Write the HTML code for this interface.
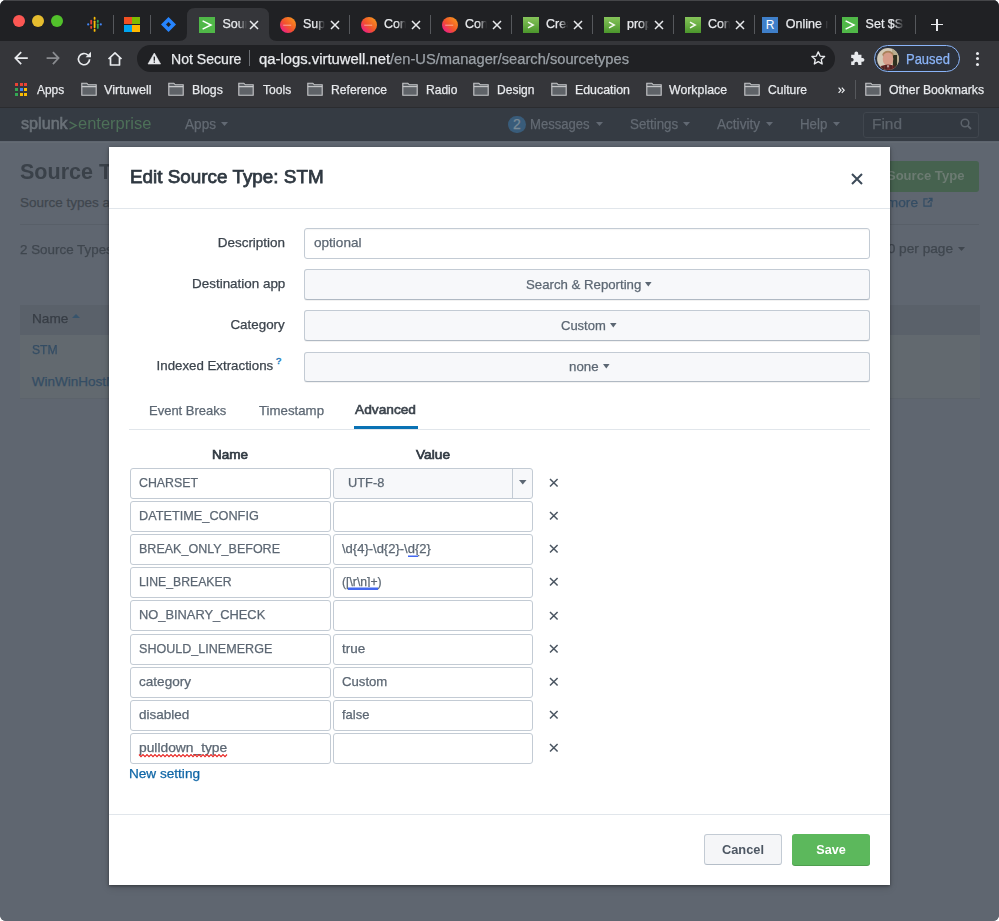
<!DOCTYPE html>
<html><head><meta charset="utf-8">
<style>
*{box-sizing:border-box;margin:0;padding:0}
html,body{width:999px;height:921px;overflow:hidden;background:#fff;font-family:"Liberation Sans",sans-serif}
.win{position:absolute;left:0;top:0;width:999px;height:921px;border-radius:6px;overflow:hidden;background:#5f6670}
.a{position:absolute}
.t{position:absolute;white-space:nowrap;line-height:1;-webkit-text-stroke:0.25px currentColor}
svg{position:absolute;overflow:visible}
</style></head><body>
<div class="win">
<div class="a" style="left:0px;top:0px;width:999px;height:41px;background:#202124"></div>
<div class="a" style="left:0px;top:0px;width:999px;height:1px;background:#454649"></div>
<div class="a" style="left:12.500000000000002px;top:14.9px;width:12.2px;height:12.2px;border-radius:50%;background:#fc5753"></div>
<div class="a" style="left:31.799999999999997px;top:14.9px;width:12.2px;height:12.2px;border-radius:50%;background:#e6bd2f"></div>
<div class="a" style="left:51.3px;top:14.9px;width:12.2px;height:12.2px;border-radius:50%;background:#52c12b"></div>
<svg style="left:179px;top:8px" width="98" height="33" viewBox="0 0 98 33"><path d="M0 33 Q8 33 8 25 L8 8 Q8 0 16 0 L82 0 Q90 0 90 8 L90 25 Q90 33 98 33 Z" fill="#35363a"/></svg>
<svg style="left:86px;top:16px" width="17" height="16" viewBox="0 0 17 16">
<circle cx="2.2" cy="8.4" r="1.1" fill="#4285f4"/><circle cx="14.8" cy="8.4" r="1.1" fill="#4285f4"/>
<rect x="4.3" y="3.8" width="1.8" height="4.8" rx=".9" fill="#ea4335"/><rect x="4.3" y="9.8" width="1.8" height="3" rx=".9" fill="#ea4335"/>
<rect x="10.9" y="3.8" width="1.8" height="3" rx=".9" fill="#34a853"/><rect x="10.9" y="7.4" width="1.8" height="5.4" rx=".9" fill="#34a853"/>
<rect x="7.7" y="0.8" width="1.8" height="3" rx=".9" fill="#fbbc04"/><rect x="7.7" y="4.4" width="1.8" height="7.8" rx=".9" fill="#fbbc04"/><rect x="7.7" y="12.8" width="1.8" height="3" rx=".9" fill="#fbbc04"/>
</svg>
<div class="a" style="left:113px;top:15px;width:1px;height:19px;background:#56585c"></div>
<div class="a" style="left:124px;top:16.5px;width:7.6px;height:7.6px;background:#f25022"></div>
<div class="a" style="left:132.4px;top:16.5px;width:7.6px;height:7.6px;background:#7fba00"></div>
<div class="a" style="left:124px;top:24.7px;width:7.6px;height:7.6px;background:#00a4ef"></div>
<div class="a" style="left:132.4px;top:24.7px;width:7.6px;height:7.6px;background:#ffb900"></div>
<div class="a" style="left:150px;top:15px;width:1px;height:19px;background:#56585c"></div>
<svg style="left:161px;top:17px" width="15" height="15" viewBox="0 0 15 15"><path d="M7.5 0 L15 7.5 L7.5 15 L0 7.5 Z" fill="#2684ff"/><path d="M7.5 5 L10 7.5 L7.5 10 L5 7.5 Z" fill="#202124"/></svg>
<svg style="left:199px;top:16.5px" width="16" height="16" viewBox="0 0 16 16"><rect width="16" height="16" fill="#50b848"/><path d="M3.6 3.8 L12 8 L3.6 12.2" stroke="#fff" stroke-width="1.5" fill="none"/></svg>
<div class="t" style="left:222.50px;top:17.92px;font-size:12.5px;color:#e8eaed;font-weight:normal;width:24px;overflow:hidden;-webkit-mask-image:linear-gradient(90deg,#000 60%,transparent);">Source Types</div>
<svg style="left:249.5px;top:20.5px" width="8" height="8" viewBox="0 0 8 8"><path d="M0 0 L8 8 M8 0 L0 8" stroke="#e8eaed" stroke-width="1.5" fill="none"/></svg>
<svg style="left:279.5px;top:16.5px" width="16" height="16" viewBox="0 0 16 16"><defs><linearGradient id="og" x1="0.1" y1="0.9" x2="0.9" y2="0.1"><stop offset="0" stop-color="#ec1b8c"/><stop offset="0.45" stop-color="#f2532c"/><stop offset="1" stop-color="#f7931e"/></linearGradient></defs><circle cx="8" cy="8" r="8" fill="url(#og)"/><rect x="3.2" y="7.7" width="8" height="1" fill="#fff" opacity=".5"/></svg>
<div class="t" style="left:303.00px;top:17.92px;font-size:12.5px;color:#e8eaed;font-weight:normal;width:22px;overflow:hidden;-webkit-mask-image:linear-gradient(90deg,#000 60%,transparent);">Support</div>
<svg style="left:330.5px;top:20.5px" width="8" height="8" viewBox="0 0 8 8"><path d="M0 0 L8 8 M8 0 L0 8" stroke="#e8eaed" stroke-width="1.5" fill="none"/></svg>
<div class="a" style="left:349px;top:15px;width:1px;height:19px;background:#56585c"></div>
<svg style="left:360.5px;top:16.5px" width="16" height="16" viewBox="0 0 16 16"><defs><linearGradient id="og" x1="0.1" y1="0.9" x2="0.9" y2="0.1"><stop offset="0" stop-color="#ec1b8c"/><stop offset="0.45" stop-color="#f2532c"/><stop offset="1" stop-color="#f7931e"/></linearGradient></defs><circle cx="8" cy="8" r="8" fill="url(#og)"/><rect x="3.2" y="7.7" width="8" height="1" fill="#fff" opacity=".5"/></svg>
<div class="t" style="left:384.00px;top:17.92px;font-size:12.5px;color:#e8eaed;font-weight:normal;width:22px;overflow:hidden;-webkit-mask-image:linear-gradient(90deg,#000 60%,transparent);">Configure</div>
<svg style="left:411.5px;top:20.5px" width="8" height="8" viewBox="0 0 8 8"><path d="M0 0 L8 8 M8 0 L0 8" stroke="#e8eaed" stroke-width="1.5" fill="none"/></svg>
<div class="a" style="left:430px;top:15px;width:1px;height:19px;background:#56585c"></div>
<svg style="left:441.5px;top:16.5px" width="16" height="16" viewBox="0 0 16 16"><defs><linearGradient id="og" x1="0.1" y1="0.9" x2="0.9" y2="0.1"><stop offset="0" stop-color="#ec1b8c"/><stop offset="0.45" stop-color="#f2532c"/><stop offset="1" stop-color="#f7931e"/></linearGradient></defs><circle cx="8" cy="8" r="8" fill="url(#og)"/><rect x="3.2" y="7.7" width="8" height="1" fill="#fff" opacity=".5"/></svg>
<div class="t" style="left:465.00px;top:17.92px;font-size:12.5px;color:#e8eaed;font-weight:normal;width:22px;overflow:hidden;-webkit-mask-image:linear-gradient(90deg,#000 60%,transparent);">Configure</div>
<svg style="left:492.5px;top:20.5px" width="8" height="8" viewBox="0 0 8 8"><path d="M0 0 L8 8 M8 0 L0 8" stroke="#e8eaed" stroke-width="1.5" fill="none"/></svg>
<div class="a" style="left:511px;top:15px;width:1px;height:19px;background:#56585c"></div>
<svg style="left:523.0px;top:16.5px" width="16" height="16" viewBox="0 0 16 16"><defs><linearGradient id="sg" x1="0" y1="0" x2="0" y2="1"><stop offset="0" stop-color="#86c45a"/><stop offset="1" stop-color="#4b962c"/></linearGradient></defs><rect width="16" height="16" fill="url(#sg)"/><path d="M5 5.2 L10.2 8 L5 10.8" stroke="#f4f8ef" stroke-width="1.5" fill="none"/></svg>
<div class="t" style="left:546.00px;top:17.92px;font-size:12.5px;color:#e8eaed;font-weight:normal;width:22px;overflow:hidden;-webkit-mask-image:linear-gradient(90deg,#000 60%,transparent);">Create</div>
<svg style="left:573.5px;top:20.5px" width="8" height="8" viewBox="0 0 8 8"><path d="M0 0 L8 8 M8 0 L0 8" stroke="#e8eaed" stroke-width="1.5" fill="none"/></svg>
<div class="a" style="left:592px;top:15px;width:1px;height:19px;background:#56585c"></div>
<svg style="left:604.0px;top:16.5px" width="16" height="16" viewBox="0 0 16 16"><defs><linearGradient id="sg" x1="0" y1="0" x2="0" y2="1"><stop offset="0" stop-color="#86c45a"/><stop offset="1" stop-color="#4b962c"/></linearGradient></defs><rect width="16" height="16" fill="url(#sg)"/><path d="M5 5.2 L10.2 8 L5 10.8" stroke="#f4f8ef" stroke-width="1.5" fill="none"/></svg>
<div class="t" style="left:627.00px;top:17.92px;font-size:12.5px;color:#e8eaed;font-weight:normal;width:22px;overflow:hidden;-webkit-mask-image:linear-gradient(90deg,#000 60%,transparent);">props</div>
<svg style="left:654.5px;top:20.5px" width="8" height="8" viewBox="0 0 8 8"><path d="M0 0 L8 8 M8 0 L0 8" stroke="#e8eaed" stroke-width="1.5" fill="none"/></svg>
<div class="a" style="left:673px;top:15px;width:1px;height:19px;background:#56585c"></div>
<svg style="left:685.0px;top:16.5px" width="16" height="16" viewBox="0 0 16 16"><defs><linearGradient id="sg" x1="0" y1="0" x2="0" y2="1"><stop offset="0" stop-color="#86c45a"/><stop offset="1" stop-color="#4b962c"/></linearGradient></defs><rect width="16" height="16" fill="url(#sg)"/><path d="M5 5.2 L10.2 8 L5 10.8" stroke="#f4f8ef" stroke-width="1.5" fill="none"/></svg>
<div class="t" style="left:708.00px;top:17.92px;font-size:12.5px;color:#e8eaed;font-weight:normal;width:22px;overflow:hidden;-webkit-mask-image:linear-gradient(90deg,#000 60%,transparent);">Configure</div>
<svg style="left:735.5px;top:20.5px" width="8" height="8" viewBox="0 0 8 8"><path d="M0 0 L8 8 M8 0 L0 8" stroke="#e8eaed" stroke-width="1.5" fill="none"/></svg>
<div class="a" style="left:754px;top:15px;width:1px;height:19px;background:#56585c"></div>
<div class="a" style="left:762.0px;top:16.5px;width:16px;height:16px;background:#3f7fc9;color:#fff;font-size:12px;line-height:16px;text-align:center">R</div>
<div class="t" style="left:785.80px;top:17.92px;font-size:12.5px;color:#e8eaed;font-weight:normal;width:42px;overflow:hidden;-webkit-mask-image:linear-gradient(90deg,#000 78%,transparent);">Online regex</div>
<div class="a" style="left:835px;top:15px;width:1px;height:19px;background:#56585c"></div>
<svg style="left:841.8px;top:16.5px" width="16" height="16" viewBox="0 0 16 16"><rect width="16" height="16" fill="#50b848"/><path d="M3.6 3.8 L12 8 L3.6 12.2" stroke="#fff" stroke-width="1.5" fill="none"/></svg>
<div class="t" style="left:865.60px;top:17.92px;font-size:12.5px;color:#e8eaed;font-weight:normal;width:38px;overflow:hidden;-webkit-mask-image:linear-gradient(90deg,#000 72%,transparent);">Set $SPLUNK</div>
<div class="a" style="left:915px;top:15px;width:1px;height:19px;background:#56585c"></div>
<div class="a" style="left:931px;top:23.8px;width:12px;height:1.6px;background:#e8eaed"></div>
<div class="a" style="left:936.2px;top:18.6px;width:1.6px;height:12px;background:#e8eaed"></div>
<div class="a" style="left:0px;top:41px;width:999px;height:67px;background:#35363a"></div>
<div class="a" style="left:0px;top:107px;width:999px;height:1px;background:#2b2c2f"></div>
<svg style="left:13px;top:50px" width="16" height="16" viewBox="0 0 16 16"><path d="M14.8 8.1 L2.3 8.1 M8.2 2.2 L2.3 8.1 L8.2 14.1" stroke="#e8eaed" stroke-width="1.7" fill="none"/></svg>
<svg style="left:45px;top:50px" width="16" height="16" viewBox="0 0 16 16"><path d="M1.6 8.1 L13.6 8.1 M7.9 2.2 L13.6 8.1 L7.9 14.1" stroke="#8a8c90" stroke-width="1.7" fill="none"/></svg>
<svg style="left:76px;top:51px" width="16" height="16" viewBox="0 0 16 16"><path d="M13.6 8.2 A5.6 5.6 0 1 1 11.9 4.1" stroke="#e8eaed" stroke-width="1.7" fill="none"/><path d="M9.6 6.2 L15 6.2 L15 0.8 Z" fill="#e8eaed"/></svg>
<svg style="left:107.3px;top:50.8px" width="16" height="16" viewBox="0 0 16 16"><path d="M1.5 8 L8 1.8 L14.5 8 M3.5 6.5 L3.5 14 L12.5 14 L12.5 6.5" stroke="#e8eaed" stroke-width="1.7" fill="none" stroke-linejoin="round"/></svg>
<div class="a" style="left:137px;top:45px;width:698px;height:26.5px;background:#202124;border-radius:13.25px"></div>
<svg style="left:148px;top:53.3px" width="12.6" height="11" viewBox="0 0 12.6 11"><path d="M6.3 0 L12.6 11 L0 11 Z" fill="#e8eaed" stroke="#e8eaed" stroke-width=".6" stroke-linejoin="round"/><rect x="5.65" y="3.6" width="1.3" height="4.1" fill="#202124"/><rect x="5.65" y="8.5" width="1.3" height="1.3" fill="#202124"/></svg>
<div class="t" style="left:170.60px;top:51.65px;font-size:14px;color:#e8eaed;font-weight:normal;transform:scaleX(1.0052);transform-origin:0 0;">Not Secure</div>
<div class="a" style="left:249px;top:50px;width:1.2px;height:16px;background:#6a6d72"></div>
<div class="t" style="left:258.50px;top:51.65px;font-size:14px;color:#e8eaed;font-weight:normal;transform:scaleX(1.0588);transform-origin:0 0;">qa-logs.virtuwell.net</div>
<div class="t" style="left:389.50px;top:51.65px;font-size:14px;color:#9aa0a6;font-weight:normal;transform:scaleX(1.0483);transform-origin:0 0;">/en-US/manager/search/sourcetypes</div>
<svg style="left:810.5px;top:51.3px" width="14.5" height="14.5" viewBox="0 0 16 16"><path d="M8 1 L10.1 5.6 L15 6.1 L11.3 9.4 L12.3 14.3 L8 11.8 L3.7 14.3 L4.7 9.4 L1 6.1 L5.9 5.6 Z" stroke="#e8eaed" stroke-width="1.5" fill="none" stroke-linejoin="round"/></svg>
<svg style="left:849.5px;top:51.3px" width="14.5" height="14" viewBox="0 0 15 15"><path d="M1 4 H4.5 V2.5 A2 2 0 0 1 8.5 2.5 V4 H12 V7.5 H13.2 A2 2 0 0 1 13.2 11.5 H12 V15 H8.5 V13.5 A2 2 0 0 0 4.5 13.5 V15 H1 V11.2 H2.3 A2 2 0 0 0 2.3 7.4 H1 Z" fill="#e8eaed"/></svg>
<div class="a" style="left:874px;top:44.8px;width:86px;height:27.4px;border:1.6px solid #8ab4f8;border-radius:13.7px;background:#2c313a"></div>
<svg style="left:876.8px;top:47.5px" width="22" height="22" viewBox="0 0 22 22"><defs><clipPath id="av"><circle cx="11" cy="11" r="10.9"/></clipPath></defs><g clip-path="url(#av)"><rect width="22" height="22" fill="#d3cab8"/><rect x="15" y="0" width="7" height="22" fill="#b8ad90"/><rect x="16" y="7" width="4" height="12" fill="#2e3020"/><ellipse cx="11" cy="6.6" rx="5.6" ry="3.8" fill="#a9825c"/><ellipse cx="11" cy="11" rx="5.3" ry="6.6" fill="#d69c8a"/><path d="M2 22 L4 18 Q11 15 18 18 L20 22 Z" fill="#6e2a2a"/><path d="M6 18 L6 22 M9 17 L9 22 M14 17 L14 22 M17 18 L17 22" stroke="#2a2022" stroke-width=".9"/><path d="M10 17.5 L11 20 L12 17.5 Z" fill="#e8e8e8"/></g></svg>
<div class="t" style="left:906.00px;top:51.65px;font-size:14px;color:#8ab4f8;font-weight:normal;transform:scaleX(0.9267);transform-origin:0 0;">Paused</div>
<div class="a" style="left:975.7px;top:52.0px;width:3.2px;height:3.2px;border-radius:50%;background:#e8eaed"></div>
<div class="a" style="left:975.7px;top:57.3px;width:3.2px;height:3.2px;border-radius:50%;background:#e8eaed"></div>
<div class="a" style="left:975.7px;top:62.6px;width:3.2px;height:3.2px;border-radius:50%;background:#e8eaed"></div>
<div class="a" style="left:14.8px;top:83.3px;width:3px;height:3px;background:#ea4335"></div>
<div class="a" style="left:19.6px;top:83.3px;width:3px;height:3px;background:#ea4335"></div>
<div class="a" style="left:24.4px;top:83.3px;width:3px;height:3px;background:#ea4335"></div>
<div class="a" style="left:14.8px;top:88.1px;width:3px;height:3px;background:#34a853"></div>
<div class="a" style="left:19.6px;top:88.1px;width:3px;height:3px;background:#4285f4"></div>
<div class="a" style="left:24.4px;top:88.1px;width:3px;height:3px;background:#fbbc04"></div>
<div class="a" style="left:14.8px;top:92.89999999999999px;width:3px;height:3px;background:#34a853"></div>
<div class="a" style="left:19.6px;top:92.89999999999999px;width:3px;height:3px;background:#fbbc04"></div>
<div class="a" style="left:24.4px;top:92.89999999999999px;width:3px;height:3px;background:#fbbc04"></div>
<div class="t" style="left:37.40px;top:82.50px;font-size:13px;color:#e8eaed;font-weight:normal;transform:scaleX(0.9180);transform-origin:0 0;">Apps</div>
<svg style="left:80.6px;top:82px" width="16" height="14" viewBox="0 0 16 14"><path d="M0.8 1.2 H5.8 L7.3 2.8 H15.2 V13.2 H0.8 Z" fill="#5f6368" stroke="#c8c9cb" stroke-width="1.1"/><path d="M0.8 4.6 H15.2" stroke="#c8c9cb" stroke-width="1.1"/></svg>
<div class="t" style="left:104.40px;top:82.50px;font-size:13px;color:#e8eaed;font-weight:normal;transform:scaleX(0.9736);transform-origin:0 0;">Virtuwell</div>
<svg style="left:168px;top:82px" width="16" height="14" viewBox="0 0 16 14"><path d="M0.8 1.2 H5.8 L7.3 2.8 H15.2 V13.2 H0.8 Z" fill="#5f6368" stroke="#c8c9cb" stroke-width="1.1"/><path d="M0.8 4.6 H15.2" stroke="#c8c9cb" stroke-width="1.1"/></svg>
<div class="t" style="left:192.00px;top:82.50px;font-size:13px;color:#e8eaed;font-weight:normal;transform:scaleX(0.9471);transform-origin:0 0;">Blogs</div>
<svg style="left:238px;top:82px" width="16" height="14" viewBox="0 0 16 14"><path d="M0.8 1.2 H5.8 L7.3 2.8 H15.2 V13.2 H0.8 Z" fill="#5f6368" stroke="#c8c9cb" stroke-width="1.1"/><path d="M0.8 4.6 H15.2" stroke="#c8c9cb" stroke-width="1.1"/></svg>
<div class="t" style="left:262.60px;top:82.50px;font-size:13px;color:#e8eaed;font-weight:normal;transform:scaleX(0.9292);transform-origin:0 0;">Tools</div>
<svg style="left:306.8px;top:82px" width="16" height="14" viewBox="0 0 16 14"><path d="M0.8 1.2 H5.8 L7.3 2.8 H15.2 V13.2 H0.8 Z" fill="#5f6368" stroke="#c8c9cb" stroke-width="1.1"/><path d="M0.8 4.6 H15.2" stroke="#c8c9cb" stroke-width="1.1"/></svg>
<div class="t" style="left:330.50px;top:82.50px;font-size:13px;color:#e8eaed;font-weight:normal;transform:scaleX(0.9337);transform-origin:0 0;">Reference</div>
<svg style="left:402px;top:82px" width="16" height="14" viewBox="0 0 16 14"><path d="M0.8 1.2 H5.8 L7.3 2.8 H15.2 V13.2 H0.8 Z" fill="#5f6368" stroke="#c8c9cb" stroke-width="1.1"/><path d="M0.8 4.6 H15.2" stroke="#c8c9cb" stroke-width="1.1"/></svg>
<div class="t" style="left:426.00px;top:82.50px;font-size:13px;color:#e8eaed;font-weight:normal;transform:scaleX(0.9274);transform-origin:0 0;">Radio</div>
<svg style="left:473px;top:82px" width="16" height="14" viewBox="0 0 16 14"><path d="M0.8 1.2 H5.8 L7.3 2.8 H15.2 V13.2 H0.8 Z" fill="#5f6368" stroke="#c8c9cb" stroke-width="1.1"/><path d="M0.8 4.6 H15.2" stroke="#c8c9cb" stroke-width="1.1"/></svg>
<div class="t" style="left:496.50px;top:82.50px;font-size:13px;color:#e8eaed;font-weight:normal;transform:scaleX(0.9267);transform-origin:0 0;">Design</div>
<svg style="left:551px;top:82px" width="16" height="14" viewBox="0 0 16 14"><path d="M0.8 1.2 H5.8 L7.3 2.8 H15.2 V13.2 H0.8 Z" fill="#5f6368" stroke="#c8c9cb" stroke-width="1.1"/><path d="M0.8 4.6 H15.2" stroke="#c8c9cb" stroke-width="1.1"/></svg>
<div class="t" style="left:574.50px;top:82.50px;font-size:13px;color:#e8eaed;font-weight:normal;transform:scaleX(0.9512);transform-origin:0 0;">Education</div>
<svg style="left:646px;top:82px" width="16" height="14" viewBox="0 0 16 14"><path d="M0.8 1.2 H5.8 L7.3 2.8 H15.2 V13.2 H0.8 Z" fill="#5f6368" stroke="#c8c9cb" stroke-width="1.1"/><path d="M0.8 4.6 H15.2" stroke="#c8c9cb" stroke-width="1.1"/></svg>
<div class="t" style="left:669.00px;top:82.50px;font-size:13px;color:#e8eaed;font-weight:normal;transform:scaleX(0.9481);transform-origin:0 0;">Workplace</div>
<svg style="left:744px;top:82px" width="16" height="14" viewBox="0 0 16 14"><path d="M0.8 1.2 H5.8 L7.3 2.8 H15.2 V13.2 H0.8 Z" fill="#5f6368" stroke="#c8c9cb" stroke-width="1.1"/><path d="M0.8 4.6 H15.2" stroke="#c8c9cb" stroke-width="1.1"/></svg>
<div class="t" style="left:767.50px;top:82.50px;font-size:13px;color:#e8eaed;font-weight:normal;transform:scaleX(0.9306);transform-origin:0 0;">Culture</div>
<svg style="left:837.5px;top:86.8px" width="7" height="6.5" viewBox="0 0 7 6.5"><path d="M0.6 0.6 L3 3.25 L0.6 5.9 M3.8 0.6 L6.2 3.25 L3.8 5.9" stroke="#e8eaed" stroke-width="1.2" fill="none"/></svg>
<div class="a" style="left:855px;top:80px;width:1px;height:19px;background:#56585c"></div>
<svg style="left:865px;top:82px" width="16" height="14" viewBox="0 0 16 14"><path d="M0.8 1.2 H5.8 L7.3 2.8 H15.2 V13.2 H0.8 Z" fill="#5f6368" stroke="#c8c9cb" stroke-width="1.1"/><path d="M0.8 4.6 H15.2" stroke="#c8c9cb" stroke-width="1.1"/></svg>
<div class="t" style="left:889.00px;top:82.50px;font-size:13px;color:#e8eaed;font-weight:normal;transform:scaleX(0.9393);transform-origin:0 0;">Other Bookmarks</div>
<div class="a" style="left:0px;top:108px;width:999px;height:33px;background:#353b43"></div>
<div class="t" style="left:20.50px;top:115.86px;font-size:16px;color:#6a7178;font-weight:normal;transform:scaleX(1.0097);transform-origin:0 0;-webkit-text-stroke:0.6px #6a7178;">splunk</div>
<svg style="left:69px;top:121px" width="8" height="9" viewBox="0 0 8 9"><path d="M0.5 0.8 L7.2 4.5 L0.5 8.2" stroke="#4d7058" stroke-width="1.4" fill="none"/></svg>
<div class="t" style="left:78.10px;top:115.86px;font-size:16px;color:#4d7058;font-weight:normal;transform:scaleX(1.0302);transform-origin:0 0;-webkit-text-stroke:0;">enterprise</div>
<div class="t" style="left:185.00px;top:117.15px;font-size:14px;color:#636a73;font-weight:normal;transform:scaleX(0.9715);transform-origin:0 0;">Apps</div>
<svg style="left:220.5px;top:122.0px" width="7" height="4" viewBox="0 0 7 4"><path d="M0 0 L7 0 L3.5 4 Z" fill="#626973"/></svg>
<div class="a" style="left:508.2px;top:115.5px;width:17.6px;height:17.6px;border-radius:50%;background:#395c7a"></div>
<div class="t" style="left:217.00px;width:600px;text-align:center;top:116.95px;font-size:14px;color:#7a8a96;font-weight:normal;">2</div>
<div class="t" style="left:530.40px;top:117.15px;font-size:14px;color:#636a73;font-weight:normal;transform:scaleX(0.9341);transform-origin:0 0;">Messages</div>
<svg style="left:595.5px;top:122.0px" width="7" height="4" viewBox="0 0 7 4"><path d="M0 0 L7 0 L3.5 4 Z" fill="#626973"/></svg>
<div class="t" style="left:629.80px;top:117.15px;font-size:14px;color:#636a73;font-weight:normal;transform:scaleX(0.9528);transform-origin:0 0;">Settings</div>
<svg style="left:683.1px;top:122.0px" width="7" height="4" viewBox="0 0 7 4"><path d="M0 0 L7 0 L3.5 4 Z" fill="#626973"/></svg>
<div class="t" style="left:717.00px;top:117.15px;font-size:14px;color:#636a73;font-weight:normal;transform:scaleX(0.9698);transform-origin:0 0;">Activity</div>
<svg style="left:765.5px;top:122.0px" width="7" height="4" viewBox="0 0 7 4"><path d="M0 0 L7 0 L3.5 4 Z" fill="#626973"/></svg>
<div class="t" style="left:799.70px;top:117.15px;font-size:14px;color:#636a73;font-weight:normal;transform:scaleX(0.9481);transform-origin:0 0;">Help</div>
<svg style="left:832.5px;top:122.0px" width="7" height="4" viewBox="0 0 7 4"><path d="M0 0 L7 0 L3.5 4 Z" fill="#626973"/></svg>
<div class="a" style="left:862.6px;top:111.6px;width:116.7px;height:26.4px;border:1px solid #40464e;border-radius:3px;background:#333941"></div>
<div class="t" style="left:871.50px;top:117.05px;font-size:14px;color:#5c636b;font-weight:normal;transform:scaleX(1.1015);transform-origin:0 0;">Find</div>
<svg style="left:960px;top:118px" width="12" height="12" viewBox="0 0 12 12"><circle cx="5" cy="5" r="3.8" stroke="#5c636b" stroke-width="1.5" fill="none"/><path d="M7.8 7.8 L11 11" stroke="#5c636b" stroke-width="1.8"/></svg>
<div class="a" style="left:0px;top:141px;width:999px;height:780px;background:#5f6670"></div>
<div class="a" style="left:0px;top:142px;width:999px;height:1.2px;background:#646b73"></div>
<div class="t" style="left:19.80px;top:160.88px;font-size:22px;color:#3a4149;font-weight:bold;transform:scaleX(0.9794);transform-origin:0 0;-webkit-text-stroke:0;">Source Types</div>
<div class="t" style="left:20.00px;top:196.27px;font-size:13.5px;color:#3f464e;font-weight:normal;">Source types are used to ...</div>
<div class="a" style="left:20px;top:223.5px;width:959px;height:1px;background:#585f68"></div>
<div class="t" style="left:19.80px;top:242.57px;font-size:13.5px;color:#3f464e;font-weight:normal;transform:scaleX(0.9915);transform-origin:0 0;">2 Source Types</div>
<div class="a" style="left:20px;top:304.5px;width:959.6px;height:30.7px;background:#5a616a"></div>
<div class="t" style="left:31.70px;top:312.27px;font-size:13.5px;color:#373d45;font-weight:normal;transform:scaleX(1.0080);transform-origin:0 0;">Name</div>
<svg style="left:71.7px;top:313.5px" width="8" height="4" viewBox="0 0 8 4"><path d="M0 4 L8 4 L4 0 Z" fill="#37546c"/></svg>
<div class="a" style="left:20px;top:335.2px;width:959.6px;height:63.4px;background:#62696f"></div>
<div class="a" style="left:20px;top:398px;width:959.6px;height:1px;background:#5c636b"></div>
<div class="t" style="left:31.70px;top:343.07px;font-size:13.5px;color:#344d64;font-weight:normal;transform:scaleX(0.9019);transform-origin:0 0;">STM</div>
<div class="t" style="left:31.70px;top:374.77px;font-size:13.5px;color:#344d64;font-weight:normal;">WinWinHostMon</div>
<div class="a" style="left:780px;top:161px;width:199.4px;height:30.7px;background:#46624f;border-radius:3px"></div>
<div class="t" style="right:34.60px;top:169.30px;font-size:13px;color:#6c7b72;font-weight:bold;transform:scaleX(1.0056);transform-origin:100% 0;-webkit-text-stroke:0;">New Source Type</div>
<div class="t" style="right:81.00px;top:195.87px;font-size:13.5px;color:#344d64;font-weight:normal;transform:scaleX(1.0140);transform-origin:100% 0;">Learn more</div>
<svg style="left:922.5px;top:198.4px" width="9.5" height="9" viewBox="0 0 10 9.5"><path d="M5 1 H1 V8.5 H8.5 V4.5 M5 5 L9.5 0.5 M6 0.5 H9.5 V4" stroke="#344d64" stroke-width="1.3" fill="none"/></svg>
<div class="t" style="right:46.00px;top:242.07px;font-size:13.5px;color:#3f464e;font-weight:normal;transform:scaleX(1.0130);transform-origin:100% 0;">20 per page</div>
<svg style="left:958.0px;top:247.0px" width="7" height="4" viewBox="0 0 7 4"><path d="M0 0 L7 0 L3.5 4 Z" fill="#3f464e"/></svg>
<div class="a" style="left:109px;top:147px;width:781px;height:738px;background:#fff;box-shadow:0 1px 3px rgba(0,0,0,.4),0 3px 8px rgba(0,0,0,.12)"></div>
<div class="t" style="left:129.60px;top:167.64px;font-size:18.5px;color:#2f3841;font-weight:normal;transform:scaleX(1.0199);transform-origin:0 0;-webkit-text-stroke:0.75px #2f3841;">Edit Source Type: STM</div>
<svg style="left:852.0px;top:173.6px" width="10" height="10" viewBox="0 0 10 10"><path d="M0 0 L10 10 M10 0 L0 10" stroke="#3c4a58" stroke-width="2" fill="none"/></svg>
<div class="a" style="left:109px;top:208px;width:781px;height:1px;background:#e1e6eb"></div>
<div class="t" style="right:713.80px;top:236.30px;font-size:13px;color:#3c444d;font-weight:normal;transform:scaleX(1.0350);transform-origin:100% 0;">Description</div>
<div class="t" style="right:713.80px;top:277.00px;font-size:13px;color:#3c444d;font-weight:normal;transform:scaleX(1.0328);transform-origin:100% 0;">Destination app</div>
<div class="t" style="right:713.80px;top:318.00px;font-size:13px;color:#3c444d;font-weight:normal;transform:scaleX(1.0294);transform-origin:100% 0;">Category</div>
<div class="t" style="right:726.20px;top:358.60px;font-size:13px;color:#3c444d;font-weight:normal;transform:scaleX(1.0212);transform-origin:100% 0;">Indexed Extractions</div>
<div class="t" style="left:276.00px;top:356.36px;font-size:9.5px;color:#1a7bbd;font-weight:normal;-webkit-text-stroke:0.4px #1a7bbd;">?</div>
<div class="a" style="left:304.1px;top:228.1px;width:566px;height:31.3px;background:#fff;border:1px solid #c3cbd4;border-radius:3px;box-shadow:inset 0 1px 1px rgba(0,0,0,.04)"></div>
<div class="t" style="left:313.50px;top:236.20px;font-size:13px;color:#5c6773;font-weight:normal;transform:scaleX(1.0431);transform-origin:0 0;">optional</div>
<div class="a" style="left:304.2px;top:269.2px;width:566px;height:30.5px;background:#f7f8fa;border:1px solid #c3cbd4;border-bottom-color:#b0b9c3;border-radius:3px;box-shadow:0 1px 0 rgba(0,0,0,.05)"></div>
<div class="t" style="left:525.70px;top:278.00px;font-size:13px;color:#5c6773;font-weight:normal;transform:scaleX(1.0163);transform-origin:0 0;">Search &amp; Reporting</div>
<svg style="left:645.4000000000001px;top:282.1px" width="6.6" height="4.4" viewBox="0 0 6.6 4.4"><path d="M0 0 L6.6 0 L3.3 4.4 Z" fill="#5c6773"/></svg>
<div class="a" style="left:304.2px;top:310.4px;width:566px;height:30.5px;background:#f7f8fa;border:1px solid #c3cbd4;border-bottom-color:#b0b9c3;border-radius:3px;box-shadow:0 1px 0 rgba(0,0,0,.05)"></div>
<div class="t" style="left:561.00px;top:319.00px;font-size:13px;color:#5c6773;font-weight:normal;transform:scaleX(1.0002);transform-origin:0 0;">Custom</div>
<svg style="left:610.4000000000001px;top:323.1px" width="6.6" height="4.4" viewBox="0 0 6.6 4.4"><path d="M0 0 L6.6 0 L3.3 4.4 Z" fill="#5c6773"/></svg>
<div class="a" style="left:304.2px;top:351.6px;width:566px;height:30.5px;background:#f7f8fa;border:1px solid #c3cbd4;border-bottom-color:#b0b9c3;border-radius:3px;box-shadow:0 1px 0 rgba(0,0,0,.05)"></div>
<div class="t" style="left:568.50px;top:359.60px;font-size:13px;color:#5c6773;font-weight:normal;transform:scaleX(1.0201);transform-origin:0 0;">none</div>
<svg style="left:603.0px;top:363.6px" width="6.6" height="4.4" viewBox="0 0 6.6 4.4"><path d="M0 0 L6.6 0 L3.3 4.4 Z" fill="#5c6773"/></svg>
<div class="t" style="left:148.70px;top:403.60px;font-size:13px;color:#5c6773;font-weight:normal;transform:scaleX(0.9998);transform-origin:0 0;">Event Breaks</div>
<div class="t" style="left:258.60px;top:403.60px;font-size:13px;color:#5c6773;font-weight:normal;transform:scaleX(1.0187);transform-origin:0 0;">Timestamp</div>
<div class="t" style="left:355.30px;top:403.17px;font-size:13.5px;color:#3c444d;font-weight:normal;transform:scaleX(1.0159);transform-origin:0 0;-webkit-text-stroke:0.6px #3c444d;">Advanced</div>
<div class="a" style="left:129px;top:429px;width:741px;height:1px;background:#e1e6eb"></div>
<div class="a" style="left:354px;top:426px;width:63.7px;height:3px;background:#0a72b4"></div>
<div class="t" style="left:-70.00px;width:600px;text-align:center;top:447.97px;font-size:13.5px;color:#2f3841;font-weight:normal;transform:scaleX(0.9997);transform-origin:50% 0;-webkit-text-stroke:0.65px #2f3841;">Name</div>
<div class="t" style="left:133.00px;width:600px;text-align:center;top:448.07px;font-size:13.5px;color:#2f3841;font-weight:normal;transform:scaleX(1.0141);transform-origin:50% 0;-webkit-text-stroke:0.65px #2f3841;">Value</div>
<div class="a" style="left:130.2px;top:467.6px;width:200.8px;height:31px;background:#fff;border:1px solid #c3cbd4;border-radius:3px"></div>
<div class="t" style="left:138.80px;top:475.50px;font-size:13px;color:#5c6773;font-weight:normal;transform:scaleX(0.9498);transform-origin:0 0;">CHARSET</div>
<div class="a" style="left:333px;top:467.6px;width:200px;height:31px;background:#f7f8fa;border:1px solid #c3cbd4;border-radius:3px"></div>
<div class="a" style="left:512.3px;top:468.6px;width:1px;height:29px;background:#c3cbd4"></div>
<svg style="left:518.75px;top:480.35px" width="7.5" height="4.5" viewBox="0 0 7.5 4.5"><path d="M0 0 L7.5 0 L3.75 4.5 Z" fill="#5c6773"/></svg>
<div class="t" style="left:347.70px;top:475.50px;font-size:13px;color:#5c6773;font-weight:normal;transform:scaleX(0.9856);transform-origin:0 0;">UTF-8</div>
<svg style="left:550.0px;top:478.8px" width="7.6" height="7.6" viewBox="0 0 7.6 7.6"><path d="M0 0 L7.6 7.6 M7.6 0 L0 7.6" stroke="#4a5561" stroke-width="1.5" fill="none"/></svg>
<div class="a" style="left:130.2px;top:500.8px;width:200.8px;height:31px;background:#fff;border:1px solid #c3cbd4;border-radius:3px"></div>
<div class="t" style="left:138.80px;top:508.70px;font-size:13px;color:#5c6773;font-weight:normal;transform:scaleX(0.9776);transform-origin:0 0;">DATETIME_CONFIG</div>
<div class="a" style="left:333px;top:500.8px;width:200px;height:31px;background:#fff;border:1px solid #c3cbd4;border-radius:3px"></div>
<svg style="left:550.0px;top:511.99999999999994px" width="7.6" height="7.6" viewBox="0 0 7.6 7.6"><path d="M0 0 L7.6 7.6 M7.6 0 L0 7.6" stroke="#4a5561" stroke-width="1.5" fill="none"/></svg>
<div class="a" style="left:130.2px;top:534.0px;width:200.8px;height:31px;background:#fff;border:1px solid #c3cbd4;border-radius:3px"></div>
<div class="t" style="left:138.80px;top:541.90px;font-size:13px;color:#5c6773;font-weight:normal;transform:scaleX(0.9630);transform-origin:0 0;">BREAK_ONLY_BEFORE</div>
<div class="a" style="left:333px;top:534.0px;width:200px;height:31px;background:#fff;border:1px solid #c3cbd4;border-radius:3px"></div>
<div class="t" style="left:341.60px;top:541.90px;font-size:13px;color:#5c6773;font-weight:normal;transform:scaleX(0.9986);transform-origin:0 0;">\d{4}-\d{2}-\d{2}</div>
<svg style="left:550.0px;top:545.2px" width="7.6" height="7.6" viewBox="0 0 7.6 7.6"><path d="M0 0 L7.6 7.6 M7.6 0 L0 7.6" stroke="#4a5561" stroke-width="1.5" fill="none"/></svg>
<div class="a" style="left:130.2px;top:567.2px;width:200.8px;height:31px;background:#fff;border:1px solid #c3cbd4;border-radius:3px"></div>
<div class="t" style="left:138.80px;top:575.10px;font-size:13px;color:#5c6773;font-weight:normal;transform:scaleX(0.9414);transform-origin:0 0;">LINE_BREAKER</div>
<div class="a" style="left:333px;top:567.2px;width:200px;height:31px;background:#fff;border:1px solid #c3cbd4;border-radius:3px"></div>
<div class="t" style="left:341.60px;top:575.10px;font-size:13px;color:#5c6773;font-weight:normal;transform:scaleX(0.9371);transform-origin:0 0;">([\r\n]+)</div>
<svg style="left:550.0px;top:578.4000000000001px" width="7.6" height="7.6" viewBox="0 0 7.6 7.6"><path d="M0 0 L7.6 7.6 M7.6 0 L0 7.6" stroke="#4a5561" stroke-width="1.5" fill="none"/></svg>
<div class="a" style="left:130.2px;top:600.4000000000001px;width:200.8px;height:31px;background:#fff;border:1px solid #c3cbd4;border-radius:3px"></div>
<div class="t" style="left:138.80px;top:608.30px;font-size:13px;color:#5c6773;font-weight:normal;transform:scaleX(0.9888);transform-origin:0 0;">NO_BINARY_CHECK</div>
<div class="a" style="left:333px;top:600.4000000000001px;width:200px;height:31px;background:#fff;border:1px solid #c3cbd4;border-radius:3px"></div>
<svg style="left:550.0px;top:611.6000000000001px" width="7.6" height="7.6" viewBox="0 0 7.6 7.6"><path d="M0 0 L7.6 7.6 M7.6 0 L0 7.6" stroke="#4a5561" stroke-width="1.5" fill="none"/></svg>
<div class="a" style="left:130.2px;top:633.6px;width:200.8px;height:31px;background:#fff;border:1px solid #c3cbd4;border-radius:3px"></div>
<div class="t" style="left:138.80px;top:641.50px;font-size:13px;color:#5c6773;font-weight:normal;transform:scaleX(0.9661);transform-origin:0 0;">SHOULD_LINEMERGE</div>
<div class="a" style="left:333px;top:633.6px;width:200px;height:31px;background:#fff;border:1px solid #c3cbd4;border-radius:3px"></div>
<div class="t" style="left:341.60px;top:641.50px;font-size:13px;color:#5c6773;font-weight:normal;transform:scaleX(1.0357);transform-origin:0 0;">true</div>
<svg style="left:550.0px;top:644.8000000000001px" width="7.6" height="7.6" viewBox="0 0 7.6 7.6"><path d="M0 0 L7.6 7.6 M7.6 0 L0 7.6" stroke="#4a5561" stroke-width="1.5" fill="none"/></svg>
<div class="a" style="left:130.2px;top:666.8000000000001px;width:200.8px;height:31px;background:#fff;border:1px solid #c3cbd4;border-radius:3px"></div>
<div class="t" style="left:138.80px;top:674.70px;font-size:13px;color:#5c6773;font-weight:normal;transform:scaleX(1.0429);transform-origin:0 0;">category</div>
<div class="a" style="left:333px;top:666.8000000000001px;width:200px;height:31px;background:#fff;border:1px solid #c3cbd4;border-radius:3px"></div>
<div class="t" style="left:341.60px;top:674.70px;font-size:13px;color:#5c6773;font-weight:normal;transform:scaleX(1.0114);transform-origin:0 0;">Custom</div>
<svg style="left:550.0px;top:678.0000000000001px" width="7.6" height="7.6" viewBox="0 0 7.6 7.6"><path d="M0 0 L7.6 7.6 M7.6 0 L0 7.6" stroke="#4a5561" stroke-width="1.5" fill="none"/></svg>
<div class="a" style="left:130.2px;top:700.0px;width:200.8px;height:31px;background:#fff;border:1px solid #c3cbd4;border-radius:3px"></div>
<div class="t" style="left:138.80px;top:707.90px;font-size:13px;color:#5c6773;font-weight:normal;transform:scaleX(1.0387);transform-origin:0 0;">disabled</div>
<div class="a" style="left:333px;top:700.0px;width:200px;height:31px;background:#fff;border:1px solid #c3cbd4;border-radius:3px"></div>
<div class="t" style="left:341.60px;top:707.90px;font-size:13px;color:#5c6773;font-weight:normal;transform:scaleX(0.9978);transform-origin:0 0;">false</div>
<svg style="left:550.0px;top:711.2px" width="7.6" height="7.6" viewBox="0 0 7.6 7.6"><path d="M0 0 L7.6 7.6 M7.6 0 L0 7.6" stroke="#4a5561" stroke-width="1.5" fill="none"/></svg>
<div class="a" style="left:130.2px;top:733.2px;width:200.8px;height:31px;background:#fff;border:1px solid #c3cbd4;border-radius:3px"></div>
<div class="t" style="left:138.80px;top:741.10px;font-size:13px;color:#5c6773;font-weight:normal;transform:scaleX(1.0612);transform-origin:0 0;">pulldown_type</div>
<div class="a" style="left:333px;top:733.2px;width:200px;height:31px;background:#fff;border:1px solid #c3cbd4;border-radius:3px"></div>
<svg style="left:550.0px;top:744.4000000000001px" width="7.6" height="7.6" viewBox="0 0 7.6 7.6"><path d="M0 0 L7.6 7.6 M7.6 0 L0 7.6" stroke="#4a5561" stroke-width="1.5" fill="none"/></svg>
<div class="t" style="left:129.00px;top:767.40px;font-size:13px;color:#0f66a6;font-weight:normal;transform:scaleX(1.0453);transform-origin:0 0;">New setting</div>
<div class="a" style="left:109px;top:814px;width:781px;height:1px;background:#e1e6eb"></div>
<div class="a" style="left:704.4px;top:834.4px;width:77.6px;height:30.8px;background:#f5f6f8;border:1px solid #c3cbd4;border-radius:3px;border-bottom-color:#b5bec8"></div>
<div class="t" style="left:443.20px;width:600px;text-align:center;top:843.00px;font-size:13px;color:#4d5763;font-weight:bold;transform:scaleX(0.9852);transform-origin:50% 0;-webkit-text-stroke:0;">Cancel</div>
<div class="a" style="left:792px;top:834.4px;width:78px;height:30.8px;background:#5cb85c;border-radius:3px;box-shadow:0 1px 0 #4e9e4e"></div>
<div class="t" style="left:531.00px;width:600px;text-align:center;top:843.00px;font-size:13px;color:#fff;font-weight:bold;transform:scaleX(0.9716);transform-origin:50% 0;-webkit-text-stroke:0;">Save</div>
<div class="a" style="left:408px;top:554.8px;width:10.3px;height:1px;background:#9fb3f6"></div>
<div class="a" style="left:408px;top:555.8px;width:10.3px;height:1.2px;background:#4468f0"></div>
<div class="a" style="left:348.2px;top:587.4px;width:30.1px;height:1px;background:#9fb3f6"></div>
<div class="a" style="left:348.2px;top:588.4px;width:30.1px;height:1.5px;background:#4468f0"></div>
<svg style="left:138.7px;top:753.8px" width="90" height="4" viewBox="0 0 90 4"><polyline points="0.00 0.5 2.00 2.6 4.00 0.5 6.00 2.6 8.00 0.5 10.00 2.6 12.00 0.5 14.00 2.6 16.00 0.5 18.00 2.6 20.00 0.5 22.00 2.6 24.00 0.5 26.00 2.6 28.00 0.5 30.00 2.6 32.00 0.5 34.00 2.6 36.00 0.5 38.00 2.6 40.00 0.5 42.00 2.6 44.00 0.5 46.00 2.6 48.00 0.5 50.00 2.6 52.00 0.5 54.00 2.6 56.00 0.5 58.00 2.6 60.00 0.5 62.00 2.6 64.00 0.5 66.00 2.6 68.00 0.5 70.00 2.6 72.00 0.5 74.00 2.6 76.00 0.5 78.00 2.6 80.00 0.5 82.00 2.6 84.00 0.5 86.00 2.6 88.00 0.5" stroke="#e8231f" stroke-width="1.1" fill="none"/></svg>
</div>
</body></html>
